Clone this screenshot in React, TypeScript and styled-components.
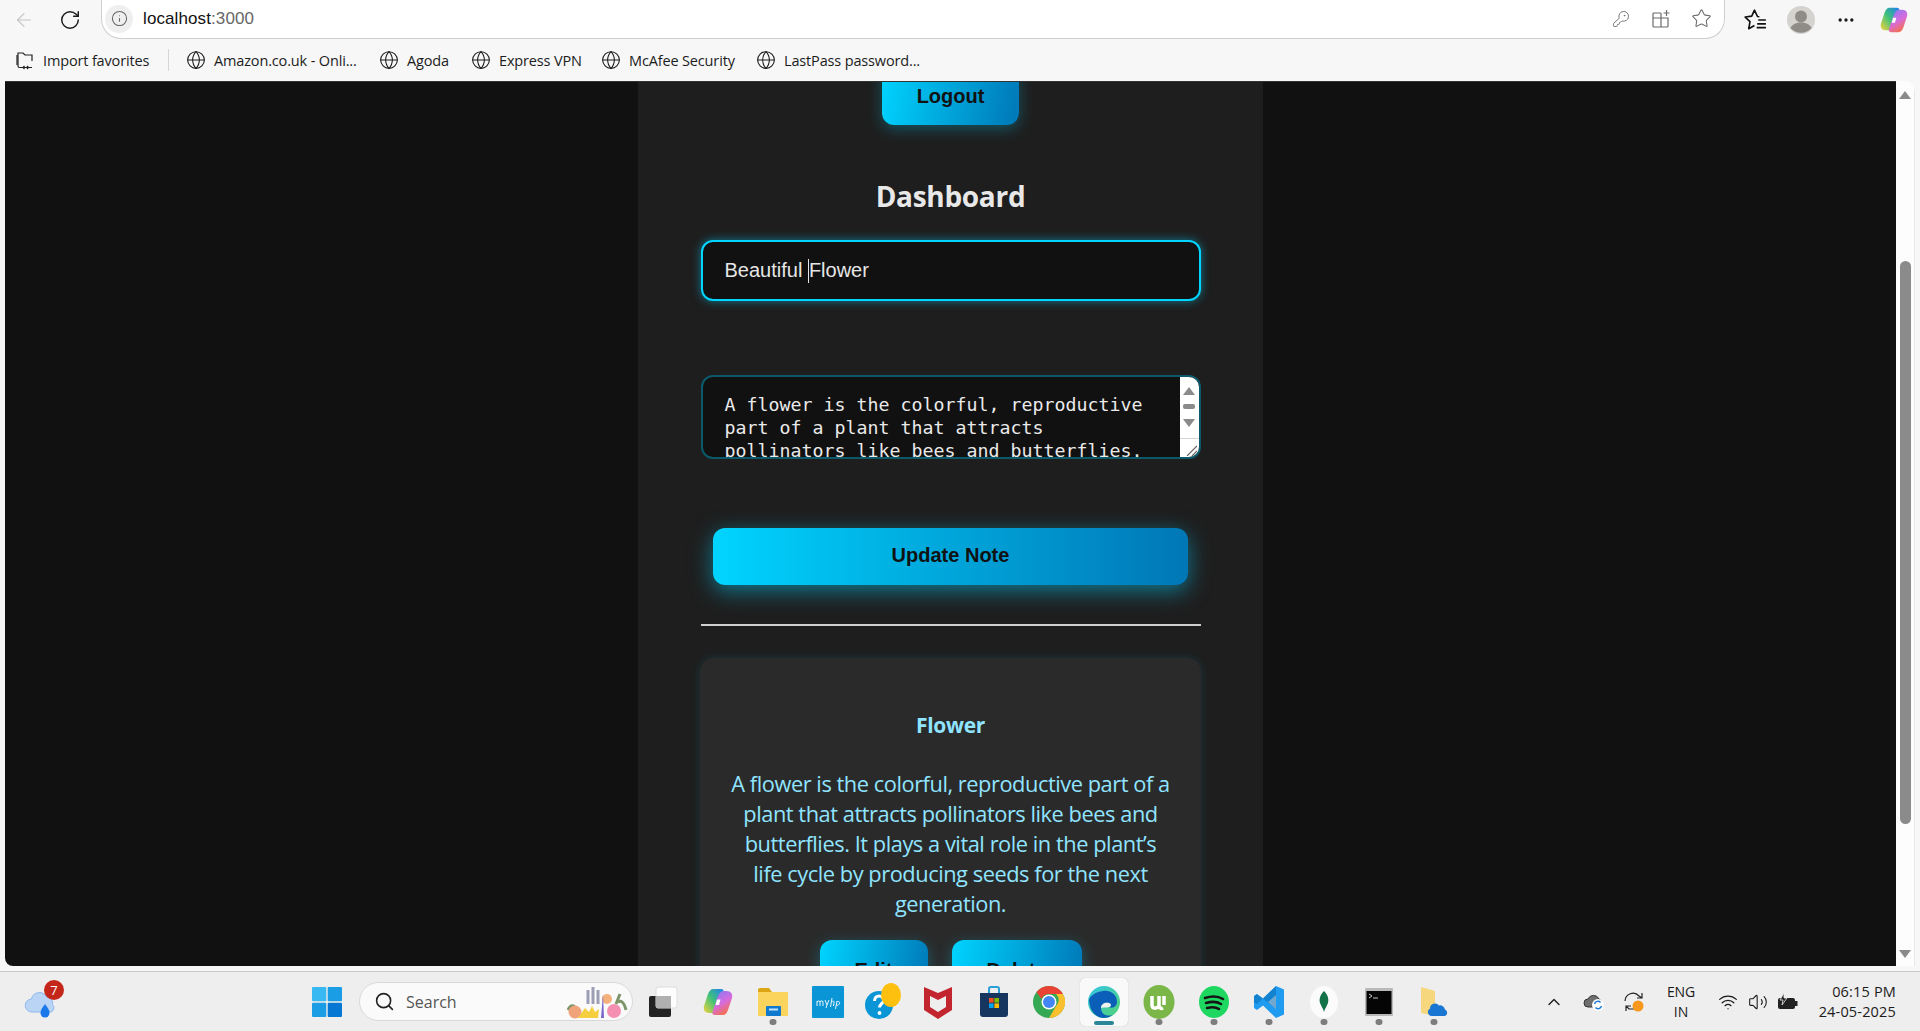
import React from 'react';
import styled, { createGlobalStyle } from 'styled-components';
import { ArrowLeft, RotateCw, Info, KeyRound, Star, Globe, ChevronUp, Search, Wifi, Volume2, MoreHorizontal } from 'lucide-react';

const GlobalStyle = createGlobalStyle`
	html, body { margin: 0; padding: 0; height: 100%; overflow: hidden; }
	* { box-sizing: border-box; }
	body { font-family: 'Open Sans', 'Liberation Sans', sans-serif; background: #f7f7f7; }
`;

const Screen = styled.div`
	width: 1920px;
	height: 1031px;
	display: flex;
	flex-direction: column;
	background: #f7f7f7;
	overflow: hidden;
`;

/* browser chrome */
const Toolbar = styled.div`
	height: 39px;
	display: flex;
	align-items: center;
	flex-shrink: 0;
`;

const NavButton = styled.div<{ $w: number; $color?: string }>`
	width: ${(p) => p.$w}px;
	height: 38px;
	display: flex;
	align-items: center;
	justify-content: center;
	flex-shrink: 0;
	color: ${(p) => p.$color || '#1a1a1a'};
`;

const AddressBar = styled.div`
	width: 1624px;
	height: 39px;
	margin-top: -1px;
	margin-left: 9px;
	background: #fff;
	border: 1px solid #cfcfcf;
	border-top: none;
	border-radius: 0 0 20px 20px / 0 0 20px 20px;
	display: flex;
	align-items: center;
	padding: 0 3px 0 3px;
`;

const InfoChip = styled.div`
	width: 28px;
	height: 28px;
	border-radius: 50%;
	background: #efefef;
	color: #666;
	display: flex;
	align-items: center;
	justify-content: center;
	margin-right: 10px;
`;

const Url = styled.span`
	font-family: 'Liberation Sans', Arial, sans-serif;
	font-size: 17px;
	letter-spacing: 0.1px;
	color: #111;
	flex: 1;
	span { color: #666; }
`;

const BarIcon = styled.div`
	width: 40px;
	display: flex;
	justify-content: center;
	color: #6b6b6b;
`;

const BookmarkBar = styled.div`
	height: 42px;
	padding: 0 0 0 15px;
	display: flex;
	align-items: center;
	flex-shrink: 0;
	font-size: 14.5px;
	letter-spacing: -0.15px;
	color: #1c1c1c;
`;

const Bookmark = styled.div<{ $w: number }>`
	width: ${(p) => p.$w}px;
	display: flex;
	align-items: center;
	gap: 8px;
	flex-shrink: 0;
	white-space: nowrap;
`;

const BookmarkDivider = styled.div`
	width: 1px;
	height: 22px;
	background: #d6d6d6;
	margin-right: 17px;
`;

/* page */
const Viewport = styled.div`
	height: 885px;
	margin: 0 5px 0 5px;
	display: flex;
	flex-shrink: 0;
	overflow: hidden;
	border-radius: 0 10px 0 8px;
	background: #fff;
`;

const Page = styled.div`
	flex: 1;
	background: #111111;
	border-top: 1px solid #333;
	display: flex;
	justify-content: center;
	overflow: hidden;
`;

const Panel = styled.main`
	width: 625px;
	height: 1100px;
	margin-top: -16px;
	background: #1e1e1e;
	padding: 0 62px;
	display: flex;
	flex-direction: column;
	align-items: center;
	flex-shrink: 0;
`;

const GlowButton = styled.button<{ $w: number }>`
	width: ${(p) => p.$w}px;
	height: 59px;
	flex-shrink: 0;
	border: none;
	border-radius: 12px;
	background: linear-gradient(100deg, #00d4ff, #0077b6);
	box-shadow: 0 4px 15px rgba(0, 212, 255, 0.3);
	font-family: 'Liberation Sans', Arial, sans-serif;
	font-size: 20px;
	font-weight: 700;
	color: #111;
	padding: 2px 0 0;
`;

const UpdateButton = styled(GlowButton)`
	height: 57px;
	margin-top: 69px;
	padding: 0 0 2px;
	background: linear-gradient(90deg, #00d4ff, #0077b6);
	box-shadow: 0 6px 22px rgba(0, 212, 255, 0.5);
`;

const Title = styled.h2`
	margin: 50px 0 0;
	height: 42px;
	line-height: 42px;
	font-size: 28px;
	font-weight: 700;
	letter-spacing: -0.3px;
	color: #e8e8e8;
`;

const TitleField = styled.div`
	width: 500px;
	height: 61px;
	margin-top: 23px;
	flex-shrink: 0;
	display: flex;
	align-items: center;
	padding: 0 22px;
	border: 2px solid #00d4ff;
	border-radius: 12px;
	background: #111;
	box-shadow: 0 0 10px rgba(0, 212, 255, 0.5);
	font-family: 'Liberation Sans', Arial, sans-serif;
	font-size: 20px;
	color: #e6e6e6;
	white-space: pre;
`;

const Caret = styled.span`
	display: inline-block;
	width: 1px;
	height: 24px;
	background: #e6e6e6;
`;

const NoteField = styled.div`
	width: 500px;
	height: 84px;
	margin-top: 74px;
	flex-shrink: 0;
	display: flex;
	border: 2px solid #0b5a6b;
	border-radius: 12px;
	background: #111;
	overflow: hidden;
`;

const NoteText = styled.div`
	flex: 1;
	padding: 16px 22px 0;
	font-family: 'DejaVu Sans Mono', 'Liberation Mono', monospace;
	font-size: 18.27px;
	line-height: 23px;
	color: #eaeaea;
	overflow: hidden;
`;

const NoteScroll = styled.div`
	width: 19px;
	background: #fff;
	display: flex;
	flex-direction: column;
	align-items: center;
	padding-top: 10px;
	flex-shrink: 0;
`;

const Triangle = styled.div<{ $down?: boolean; $size?: number }>`
	width: 0;
	height: 0;
	border-left: ${(p) => p.$size || 6.5}px solid transparent;
	border-right: ${(p) => p.$size || 6.5}px solid transparent;
	${(p) => (p.$down ? 'border-top' : 'border-bottom')}: 8px solid #8a8a8a;
`;

const NoteThumb = styled.div`
	width: 12px;
	height: 5px;
	margin: 9px 0 10px;
	border-radius: 2px;
	background: #8a8a8a;
`;

const Resizer = styled.div`
	margin-top: auto;
	width: 100%;
	height: 19px;
	border-top: 1px solid #d4d4d4;
	display: flex;
	align-items: flex-end;
	justify-content: flex-end;
	padding: 0 2px 1px 0;
`;

const Rule = styled.hr`
	width: 500px;
	height: 2px;
	margin: 39px 0 0;
	border: none;
	flex-shrink: 0;
	background: #d0d0d0;
`;

const Card = styled.section`
	width: 501px;
	margin-top: 32px;
	padding: 48px 30px 0;
	flex-shrink: 0;
	border-radius: 14px;
	background: #2a2a2a;
	box-shadow: 0 0 10px rgba(0, 212, 255, 0.13);
	text-align: center;
	color: #90e4ff;
`;

const CardTitle = styled.h3`
	margin: 0;
	height: 38px;
	line-height: 38px;
	font-size: 21px;
	font-weight: 700;
	letter-spacing: -0.3px;
`;

const CardText = styled.p`
	margin: 25px 0 0;
	font-size: 21.8px;
	line-height: 30px;
	letter-spacing: -0.45px;
`;

const CardActions = styled.div`
	display: flex;
	justify-content: center;
	gap: 24px;
	margin-top: 21px;
`;

/* window scrollbar */
const WindowScroll = styled.div`
	width: 19px;
	margin-top: 0;
	background: #fdfdfd;
	display: flex;
	flex-direction: column;
	align-items: center;
	padding-top: 10px;
	flex-shrink: 0;
	border-right: 1px solid #e8e8e8;
`;

const WindowThumb = styled.div`
	width: 11px;
	height: 563px;
	margin-top: 162px;
	border-radius: 6px;
	background: #8b8b8b;
`;

const WindowArrowDown = styled.div`
	margin-top: auto;
	margin-bottom: 8px;
`;

/* taskbar */
const Taskbar = styled.footer`
	height: 60px;
	margin-top: 5px;
	background: #eeeeee;
	border-top: 1px solid #c9c9c9;
	display: flex;
	align-items: center;
	flex-shrink: 0;
	font-family: 'Open Sans', sans-serif;
	color: #1b1b1b;
`;

const WeatherSlot = styled.div`
	width: 312px;
	padding-left: 24px;
	display: flex;
	flex-shrink: 0;
	align-items: center;
`;

const Weather = styled.div`
	position: relative;
	width: 34px;
	height: 40px;
	display: flex;
	align-items: flex-end;
`;

const WeatherBadge = styled.span`
	position: absolute;
	top: -2px;
	right: -6px;
	width: 20px;
	height: 20px;
	border-radius: 50%;
	background: #c4261a;
	color: #fff;
	font-size: 13px;
	line-height: 20px;
	text-align: center;
`;

const SearchPill = styled.div`
	width: 274px;
	height: 39px;
	margin-left: 17px;
	margin-right: 6px;
	flex-shrink: 0;
	border-radius: 20px;
	background: #fafafa;
	border: 1px solid #d9d9d9;
	display: flex;
	align-items: center;
	padding: 0 4px 0 14px;
	font-size: 16px;
	color: #555;
	gap: 11px;
`;

const SearchLabel = styled.span`
	flex: 1;
`;

const AppSlot = styled.div<{ $active?: boolean; $dot?: boolean }>`
	position: relative;
	width: 48px;
	height: 48px;
	margin-right: 7.1px;
	flex-shrink: 0;
	display: flex;
	align-items: center;
	justify-content: center;
	border-radius: 5px;
	background: ${(p) => (p.$active ? '#f9f9f9' : 'transparent')};
	box-shadow: ${(p) => (p.$active ? '0 0 1px rgba(0,0,0,.25)' : 'none')};
	&::after {
		content: '';
		display: ${(p) => (p.$dot || p.$active ? 'block' : 'none')};
		position: absolute;
		bottom: 1px;
		left: 50%;
		transform: translateX(-50%);
		width: ${(p) => (p.$active ? '20px' : '7px')};
		height: ${(p) => (p.$active ? '4px' : '6px')};
		border-radius: 3px;
		background: ${(p) => (p.$active ? '#2b8697' : '#7d7d7d')};
	}
`;

const Tray = styled.div`
	display: flex;
	align-items: center;
	margin-left: auto;
	padding-right: 24px;
	flex-shrink: 0;
`;

const TrayIcon = styled.div<{ $w: number }>`
	width: ${(p) => p.$w}px;
	display: flex;
	justify-content: center;
	flex-shrink: 0;
`;

const Lang = styled.div`
	width: 50px;
	margin: 0 7px 0 2px;
	text-align: center;
	font-size: 14px;
	line-height: 20px;
	letter-spacing: -0.1px;
`;

const Clock = styled.div`
	width: 93px;
	text-align: right;
	font-size: 14.5px;
	line-height: 20px;
	letter-spacing: 0.17px;
`;

/* drawings */
const FolderImport = () => (
	<svg width="20" height="20" viewBox="0 0 20 20" fill="none" stroke="#222" strokeWidth="1.2">
		<path d="M3 16V3h5l2 2h7v6" />
		<path d="M3 16c0 1 .6 1.5 1.5 1.5H8M12 17.5h5M2 5v10" />
		<path d="M8 17.5h5M9.5 16l-1.5 1.5L9.500 19M12 16l1.500 1.500L12 19" />
	</svg>
);

const GridAdd = () => (
	<svg width="20" height="20" viewBox="0 0 20 20" fill="none" stroke="#6b6b6b" strokeWidth="1.2">
		<path d="M10 4H3a1 1 0 0 0-1 1v12a1 1 0 0 0 1 1h13a1 1 0 0 0 1-1V9H2M10 4v14" />
		<path d="M15.500 1v6M12.500 4h6" />
	</svg>
);

const FavoritesIcon = () => (
	<svg width="24" height="24" viewBox="0 0 22 22" fill="none" stroke="#111" strokeWidth="1.500" strokeLinejoin="round">
		<path d="M15 8l-1.700-.2L10.500 2 8 7.500 2 8.300l4.400 4.100L5.300 19l5.200-3" />
		<path d="M14 11h7M13 14.500h8M12.500 18h8.500" />
	</svg>
);

const Avatar = () => (
	<svg width="28" height="28" viewBox="0 0 28 28">
		<circle cx="14" cy="14" r="14" fill="#d5d3d0" />
		<circle cx="14" cy="10.500" r="6" fill="#8f8c88" />
		<path d="M3.500 22c2-4 6-5.500 10.500-5.500s8.500 1.500 10.500 5.500a14 14 0 0 1-21 0z" fill="#8f8c88" />
	</svg>
);

const CopilotIcon = ({ size, id }: { size: number; id: string }) => (
	<svg width={size} height={size} viewBox="0 0 30 30">
		<defs>
			<linearGradient id={`${id}A`} x1="0" y1="1" x2="1" y2="0">
				<stop offset="0" stopColor="#f4d33a" />
				<stop offset="0.5" stopColor="#3fc27a" />
				<stop offset="1" stopColor="#1f7ff0" />
			</linearGradient>
			<linearGradient id={`${id}B`} x1="0.2" y1="0" x2="0.7" y2="1">
				<stop offset="0" stopColor="#8a7bf0" />
				<stop offset="0.5" stopColor="#d56be0" />
				<stop offset="1" stopColor="#f8703c" />
			</linearGradient>
		</defs>
		<path d="M10 2h8c2 0 3 1 2.500 3L15 21c-1 3-3 5-6 5H6.500C2 26 0 23 1 19L5 7c1-3 3-5 5-5z" fill={`url(#${id}A)`} />
		<path d="M20 28h-8c-2 0-3-1-2.500-3L15 9c1-3 3-5 6-5h2.500C28 4 30 7 29 11l-4 12c-1 3-3 5-5 5z" fill={`url(#${id}B)`} />
		<path d="M14 12.500h3.500l-1.500 5.500h-3.500z" fill="#fff" />
	</svg>
);

const WeatherIcon = () => (
	<svg width="34" height="36" viewBox="0 0 34 36">
		<path d="M8 26a6.500 6.500 0 0 1-.5-13 8 8 0 0 1 15-2 6 6 0 0 1 6 7.500A4.500 4.500 0 0 1 27 26z" fill="#b9d4f5" stroke="#8db8ee" />
		<path d="M21 18c3 4 4.500 6.500 4.500 9a4.500 4.500 0 0 1-9 0c0-2.500 1.500-5 4.500-9z" fill="#1a78ea" />
	</svg>
);

const WindowsLogo = () => (
	<svg width="30" height="30" viewBox="0 0 30 30">
		<rect x="0" y="0" width="14.300" height="14.300" rx="1" fill="#38b9f2" />
		<rect x="15.700" y="0" width="14.300" height="14.300" rx="1" fill="#1b9de6" />
		<rect x="0" y="15.700" width="14.300" height="14.300" rx="1" fill="#1b9de6" />
		<rect x="15.700" y="15.700" width="14.300" height="14.300" rx="1" fill="#0678d4" />
	</svg>
);

const Bouquet = () => (
	<svg width="62" height="36" viewBox="0 0 62 36">
		<path d="M2 26c3-6 6-5 8-1M60 26c-2-8-5-10-8-8M54 10l-4 10" stroke="#7d9569" strokeWidth="3" fill="none" />
		<path d="M22 20V6M27 20V3M32 20V6" stroke="#9d9db5" strokeWidth="3" />
		<circle cx="9" cy="28" r="6.500" fill="#f0a27a" />
		<circle cx="48" cy="27" r="7" fill="#f48fb1" />
		<circle cx="41" cy="15" r="5" fill="#f4b07a" />
		<path d="M37 10l-2 24h3z" fill="#7a66c9" />
		<path d="M12 34l7-10 4 4 3-6 3 6 4-3-1 9z" fill="#f5cf3e" />
	</svg>
);

const TaskViewIcon = () => (
	<svg width="30" height="32" viewBox="0 0 30 32">
		<rect x="1" y="10" width="22" height="21" rx="2" fill="#222" />
		<rect x="8" y="1" width="21" height="21" rx="2" fill="#fff" fillOpacity="0.85" stroke="#ddd" />
		<rect x="8" y="10" width="15" height="12" fill="#b0b0b0" />
	</svg>
);

const ExplorerIcon = () => (
	<svg width="32" height="30" viewBox="0 0 32 30">
		<path d="M1 3a2 2 0 0 1 2-2h9l3 4h-14z" fill="#dba514" />
		<path d="M1 5h30v23a1 1 0 0 1-1 1H2a1 1 0 0 1-1-1z" fill="#fbd45d" />
		<rect x="9" y="19" width="15" height="10" rx="1" fill="#0f78cf" />
		<rect x="12" y="21.500" width="9" height="2" fill="#bfe3ff" />
	</svg>
);

const MyHpIcon = () => (
	<svg width="32" height="32" viewBox="0 0 32 32">
		<rect width="32" height="32" rx="1" fill="#0a96d6" />
		<path d="M5 20v-5M5 16c1-1.500 3-1.500 3 0v4M8 16c1-1.500 3-1.500 3 0v4M13 14l2 5 2-5M15 19l-1 3M20 12l-1.500 9M19.500 16c1.500-1.500 3-1 2.500 1l-.6 3M25 15l-1.500 8M24.800 16c2-1.500 3.500 0 2.500 2-1 1.500-2.500 1.500-3 .8" stroke="#fff" strokeWidth="0.9" fill="none" />
	</svg>
);

const HelpIcon = () => (
	<svg width="38" height="38" viewBox="0 0 38 38">
		<circle cx="15" cy="22" r="14" fill="#0a96d6" />
		<path d="M10.500 18c0-3 2-5 4.500-5s4.500 2 4.500 4.500c0 3-4 3.500-4 7" stroke="#fff" strokeWidth="3" fill="none" />
		<circle cx="15.500" cy="30" r="1.900" fill="#fff" />
		<ellipse cx="27" cy="12" rx="10" ry="12" fill="#fdc00f" />
	</svg>
);

const McAfeeIcon = () => (
	<svg width="28" height="34" viewBox="0 0 28 34">
		<path d="M0 2l14 6 14-6v23L14 34 0 25zM6 11v11l8 5 8-5V11l-8 4z" fill="#c2252d" fillRule="evenodd" />
	</svg>
);

const StoreIcon = () => (
	<svg width="30" height="32" viewBox="0 0 30 32">
		<path d="M10 8V3a2 2 0 0 1 2-2h6a2 2 0 0 1 2 2v5" stroke="#2a9fd8" strokeWidth="2" fill="none" />
		<path d="M1 7h28v21a3 3 0 0 1-3 3H4a3 3 0 0 1-3-3z" fill="#17365f" />
		<rect x="10" y="12" width="4.600" height="4.600" fill="#f25022" />
		<rect x="15.400" y="12" width="4.600" height="4.600" fill="#7fba00" />
		<rect x="10" y="17.400" width="4.600" height="4.600" fill="#00a4ef" />
		<rect x="15.400" y="17.400" width="4.600" height="4.600" fill="#ffb900" />
	</svg>
);

const ChromeIcon = () => (
	<svg width="32" height="32" viewBox="0 0 32 32">
		<circle cx="16" cy="16" r="16" fill="#34a853" />
		<path d="M16 0a16 16 0 0 1 13.900 8H16a8 8 0 0 0-7.500 5L3.500 6A16 16 0 0 1 16 0z" fill="#ea4335" />
		<path d="M29.900 8A16 16 0 0 1 16 32l7-12a8 8 0 0 0 0-12z" fill="#fbc02d" />
		<circle cx="16" cy="16" r="7.500" fill="#fff" />
		<circle cx="16" cy="16" r="6" fill="#4285f4" />
	</svg>
);

const EdgeIcon = () => (
	<svg width="32" height="32" viewBox="0 0 32 32">
		<defs>
			<linearGradient id="edgeA" x1="0" y1="0" x2="1" y2="1">
				<stop offset="0" stopColor="#33c6e8" />
				<stop offset="1" stopColor="#52d273" />
			</linearGradient>
		</defs>
		<circle cx="16" cy="16" r="16" fill="url(#edgeA)" />
		<path d="M1 14C2 30 14 36 25 29c-7 2-12-1-12-7 0-4 4-6 8-5 3 1 2 4 0 4 4 2 8-1 8-5C29 8 22 4 15 5 7 6 2 10 1 14z" fill="#0c5fb8" />
		<path d="M13 22c0-4 4-6 8-5 3 1 2 4 0 4-3 1-5 0-8 1z" fill="#f0f0f0" />
	</svg>
);

const UTorrentIcon = () => (
	<svg width="32" height="34" viewBox="0 0 32 34">
		<ellipse cx="16" cy="17" rx="15.500" ry="17" fill="#7ab648" />
		<path d="M9 11v9c0 4 5 4 7 1v-10M16 20c0 3 2 4 4 3M21 11v9" stroke="#fff" strokeWidth="3.500" fill="none" />
	</svg>
);

const SpotifyIcon = () => (
	<svg width="30" height="32" viewBox="0 0 30 32">
		<ellipse cx="15" cy="16" rx="15" ry="16" fill="#1ed760" />
		<path d="M6 12c6-2 13-2 18 1M7 17c5-1.500 11-1.500 15 1M8 22c4-1 9-1 12 1" stroke="#151515" strokeWidth="2.600" strokeLinecap="round" fill="none" />
	</svg>
);

const VsCodeIcon = () => (
	<svg width="30" height="32" viewBox="0 0 30 32">
		<path d="M22 0l8 3.500v25L22 32 9 19.500 3 24l-3-2v-12l3-2 6 4.500zM22 9l-8 7 8 7z" fill="#1f9cf0" fillRule="evenodd" />
		<path d="M22 0L3 18l-3-1.500V10l3-2 19 15z" fill="#0a6fb8" fillOpacity="0.55" />
	</svg>
);

const MongoIcon = () => (
	<svg width="28" height="32" viewBox="0 0 28 32">
		<ellipse cx="14" cy="16" rx="14" ry="16" fill="#fbfbfb" />
		<path d="M14 5c4 4 5 8 4 12-1 3-3 5-4 9-1-4-3-6-4-9-1-4 0-8 4-12z" fill="#13714a" />
	</svg>
);

const TerminalIcon = () => (
	<svg width="28" height="28" viewBox="0 0 28 28">
		<rect width="28" height="28" rx="1" fill="#b9b9b9" />
		<rect x="1.500" y="3" width="25" height="23" fill="#050505" />
		<path d="M4 6l3 2-3 2M8 10h5" stroke="#ddd" strokeWidth="0.9" fill="none" />
	</svg>
);

const OneDriveFolder = () => (
	<svg width="30" height="32" viewBox="0 0 30 32">
		<path d="M2 1l14 4v25L2 27z" fill="#f6d77d" />
		<path d="M12 30a4 4 0 0 1-1-7.500 5 5 0 0 1 9-3 5 5 0 0 1 6 4 3.500 3.500 0 0 1 0 6.500z" fill="#1976d2" />
	</svg>
);

const CloudSync = () => (
	<svg width="22" height="20" viewBox="0 0 22 20">
		<path d="M5 15a4 4 0 0 1 0-8 6 6 0 0 1 11 0 3 3 0 0 1 2 3l-4 5z" fill="#6e6e6e" stroke="#333" />
		<circle cx="15" cy="13" r="6" fill="#fff" />
		<path d="M11.500 12a3.500 3.500 0 0 1 6-1.500M18.500 14a3.500 3.500 0 0 1-6 1.500" stroke="#1a78d6" strokeWidth="1.400" fill="none" />
	</svg>
);

const SyncDot = () => (
	<svg width="22" height="22" viewBox="0 0 22 22">
		<path d="M2 10a8 8 0 0 1 14-5l3 2M19 2v5h-5M3 15l3 3h5M3 20v-5h5" stroke="#222" strokeWidth="1.200" fill="none" />
		<circle cx="15" cy="15" r="5.500" fill="#f7981d" />
	</svg>
);

const BatteryIcon = () => (
	<svg width="22" height="18" viewBox="0 0 22 18">
		<rect x="1" y="5" width="17" height="11" rx="2" fill="#222" />
		<rect x="18" y="8" width="2.500" height="5" fill="#222" />
		<path d="M7 0L3 7h3l-1 5 5-7H7z" fill="#222" stroke="#eee" strokeWidth="0.8" />
	</svg>
);

const bookmarks = [
	{ label: 'Amazon.co.uk - Onli...', w: 193 },
	{ label: 'Agoda', w: 92 },
	{ label: 'Express VPN', w: 130 },
	{ label: 'McAfee Security', w: 155 },
	{ label: 'LastPass password...', w: 170 },
];

const apps = [
	{ id: 'copilot', icon: <CopilotIcon size={30} id="copBar" /> },
	{ id: 'explorer', icon: <ExplorerIcon />, dot: true },
	{ id: 'myhp', icon: <MyHpIcon /> },
	{ id: 'help', icon: <HelpIcon /> },
	{ id: 'mcafee', icon: <McAfeeIcon /> },
	{ id: 'store', icon: <StoreIcon /> },
	{ id: 'chrome', icon: <ChromeIcon /> },
	{ id: 'edge', icon: <EdgeIcon />, active: true },
	{ id: 'utorrent', icon: <UTorrentIcon />, dot: true },
	{ id: 'spotify', icon: <SpotifyIcon />, dot: true },
	{ id: 'vscode', icon: <VsCodeIcon />, dot: true },
	{ id: 'mongo', icon: <MongoIcon />, dot: true },
	{ id: 'terminal', icon: <TerminalIcon />, dot: true },
	{ id: 'folder', icon: <OneDriveFolder />, dot: true },
];

const App = (): JSX.Element => {
	return (
		<Screen>
			<GlobalStyle />
			<Toolbar>
				<NavButton $w={48} $color="#c4c4c4">
					<ArrowLeft size={22} strokeWidth={1.2} />
				</NavButton>
				<NavButton $w={44}>
					<RotateCw size={22} strokeWidth={1.6} />
				</NavButton>
				<AddressBar>
					<InfoChip>
						<Info size={17} strokeWidth={1.5} />
					</InfoChip>
					<Url>
						localhost<span>:3000</span>
					</Url>
					<BarIcon>
						<KeyRound size={18} strokeWidth={1.2} />
					</BarIcon>
					<BarIcon>
						<GridAdd />
					</BarIcon>
					<BarIcon>
						<Star size={21} strokeWidth={1.2} />
					</BarIcon>
				</AddressBar>
				<NavButton $w={60}>
					<FavoritesIcon />
				</NavButton>
				<NavButton $w={32}>
					<Avatar />
				</NavButton>
				<NavButton $w={58}>
					<MoreHorizontal size={20} strokeWidth={2} />
				</NavButton>
				<NavButton $w={38}>
					<CopilotIcon size={28} id="copTop" />
				</NavButton>
			</Toolbar>
			<BookmarkBar>
				<Bookmark $w={153}>
					<FolderImport />
					Import favorites
				</Bookmark>
				<BookmarkDivider />
				{bookmarks.map((b) => (
					<Bookmark key={b.label} $w={b.w}>
						<Globe size={20} strokeWidth={1.3} />
						{b.label}
					</Bookmark>
				))}
			</BookmarkBar>
			<Viewport>
				<Page>
					<Panel>
						<GlowButton $w={137}>Logout</GlowButton>
						<Title>Dashboard</Title>
						<TitleField>
							Beautiful <Caret />Flower
						</TitleField>
						<NoteField>
							<NoteText>
								A flower is the colorful, reproductive part of a plant that attracts pollinators like bees and butterflies. It plays a vital role in the plant's life cycle.
							</NoteText>
							<NoteScroll>
								<Triangle />
								<NoteThumb />
								<Triangle $down />
								<Resizer>
									<svg width="11" height="11" viewBox="0 0 11 11" stroke="#666" strokeWidth="1.2">
										<path d="M1 11L11 1M6 11l5-5" />
									</svg>
								</Resizer>
							</NoteScroll>
						</NoteField>
						<UpdateButton $w={475}>Update Note</UpdateButton>
						<Rule />
						<Card>
							<CardTitle>Flower</CardTitle>
							<CardText>
								A flower is the colorful, reproductive part of a plant that attracts pollinators like bees and butterflies. It plays a vital role in the plant’s life cycle by producing seeds for the next generation.
							</CardText>
							<CardActions>
								<GlowButton $w={108}>Edit</GlowButton>
								<GlowButton $w={130}>Delete</GlowButton>
							</CardActions>
						</Card>
					</Panel>
				</Page>
				<WindowScroll>
					<Triangle $size={6} />
					<WindowThumb />
					<WindowArrowDown>
						<Triangle $size={6} $down />
					</WindowArrowDown>
				</WindowScroll>
			</Viewport>
			<Taskbar>
				<WeatherSlot>
					<Weather>
						<WeatherIcon />
						<WeatherBadge>7</WeatherBadge>
					</Weather>
				</WeatherSlot>
				<WindowsLogo />
				<SearchPill>
					<Search size={21} strokeWidth={1.8} color="#222" />
					<SearchLabel>Search</SearchLabel>
					<Bouquet />
				</SearchPill>
				<AppSlot>
					<TaskViewIcon />
				</AppSlot>
				{apps.map((a) => (
					<AppSlot key={a.id} $active={a.active} $dot={a.dot}>
						{a.icon}
					</AppSlot>
				))}
				<Tray>
					<TrayIcon $w={40}>
						<ChevronUp size={20} strokeWidth={1.6} />
					</TrayIcon>
					<TrayIcon $w={40}>
						<CloudSync />
					</TrayIcon>
					<TrayIcon $w={40}>
						<SyncDot />
					</TrayIcon>
					<Lang>
						ENG
						<br />
						IN
					</Lang>
					<TrayIcon $w={30}>
						<Wifi size={20} strokeWidth={1.5} />
					</TrayIcon>
					<TrayIcon $w={30}>
						<Volume2 size={20} strokeWidth={1.3} />
					</TrayIcon>
					<TrayIcon $w={30}>
						<BatteryIcon />
					</TrayIcon>
					<Clock>
						06:15 PM
						<br />
						24-05-2025
					</Clock>
				</Tray>
			</Taskbar>
		</Screen>
	);
};

export default App;
